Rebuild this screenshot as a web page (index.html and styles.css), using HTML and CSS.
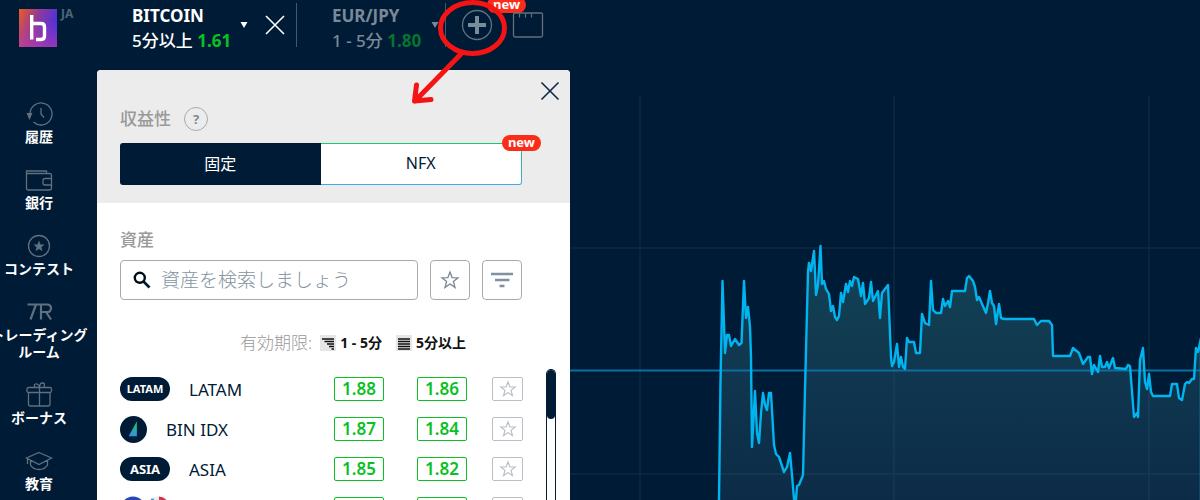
FILE: index.html
```html
<!DOCTYPE html>
<html lang="ja">
<head>
    <meta charset="UTF-8">
    <meta name="viewport" content="width=device-width, initial-scale=1.0">
    <title>BITCOIN</title>
    <link rel="stylesheet" href="styles.css">
</head>
<body>

<header class="topbar">
    <div class="brand">
        <svg class="logo" viewBox="0 0 38 38" aria-hidden="true">
            <defs>
                <linearGradient id="logoFill" x1="0" y1="0" x2="1" y2="0.4">
                    <stop offset="0" stop-color="#ea5c22"/>
                    <stop offset="0.5" stop-color="#8e3a9c"/>
                    <stop offset="1" stop-color="#4a2fe0"/>
                </linearGradient>
                <linearGradient id="logoShade" x1="0" y1="0" x2="0" y2="1">
                    <stop offset="0.3" stop-color="#c93f98" stop-opacity="0"/>
                    <stop offset="1" stop-color="#c93f98" stop-opacity="0.6"/>
                </linearGradient>
            </defs>
            <path fill="url(#logoFill)" d="M0 0h38v38H0z"/>
            <path fill="url(#logoShade)" d="M0 0h38v38H0z"/>
            <path fill="none" stroke="#fff" stroke-width="3.4" d="M12.700 6v24.500M12.700 14.500h9.300q3.500 0 3.500 3.500v9q0 3.500-3.500 3.500h-5"/>
        </svg>
        <span class="lang">JA</span>
    </div>

    <div class="asset">
        <div class="asset-text">
            <div class="asset-name">BITCOIN</div>
            <div class="asset-info">5分以上 <b>1.61</b></div>
        </div>
        <svg class="caret" viewBox="0 0 8 6" aria-hidden="true"><path fill="currentColor" d="M0.500 0h7L4 6z"/></svg>
        <button class="icon-btn close-tab" aria-label="閉じる">
            <svg width="20" height="20" viewBox="0 0 20 20"><path fill="none" stroke="#fff" stroke-width="1.600" d="M1 1l18 18M19 1L1 19"/></svg>
        </button>
    </div>

    <div class="asset inactive">
        <div class="asset-text">
            <div class="asset-name">EUR/JPY</div>
            <div class="asset-info">1 - 5分 <b>1.80</b></div>
        </div>
        <svg class="caret" viewBox="0 0 8 6" aria-hidden="true"><path fill="currentColor" d="M0.500 0h7L4 6z"/></svg>
    </div>

    <div class="tools">
        <button class="icon-btn" aria-label="追加">
            <svg width="32" height="32" viewBox="0 0 32 32">
                <circle cx="16" cy="16" r="14.500" fill="none" stroke="#60717f" stroke-width="1.300"/>
                <path stroke="#7a8b99" stroke-width="4" d="M16 7v18M7 16h18"/>
            </svg>
            <span class="badge">new</span>
        </button>
        <button class="icon-btn" aria-label="レイアウト">
            <svg width="32" height="28" viewBox="0 0 32 28">
                <rect x="1.500" y="2" width="29" height="24" rx="1.500" fill="none" stroke="#60717f" stroke-width="1.300"/>
                <path stroke="#60717f" stroke-width="1.200" d="M7.500 2.500v4M13.500 2.500v4M19.500 2.500v4"/>
            </svg>
        </button>
    </div>
</header>

<div class="content">
    <nav class="sidebar">
        <a href="#" class="nav-item">
            <svg viewBox="0 0 28 28">
                <path d="M5 14A11 11 0 1 1 8.500 22M16 8v6l3 3.500"/>
                <path class="solid" d="M1.500 13h6l-3 7z"/>
            </svg>
            <span>履歴</span>
        </a>
        <a href="#" class="nav-item">
            <svg viewBox="0 0 28 28">
                <path d="M1.500 7.500V22q0 2 2 2h21q2 0 2-2V9.500q0-2-2-2h-23V5h20v2.500M26.500 12.500H20q-2 0-2 2V17q0 2 2 2h6.500"/>
            </svg>
            <span>銀行</span>
        </a>
        <a href="#" class="nav-item">
            <svg viewBox="0 0 28 28">
                <circle cx="14" cy="14" r="10.500"/>
                <path class="solid" d="M14 8.500l1.500 3.900 4 .2-3.100 2.600 1.100 4-3.500-2.300-3.500 2.300 1.100-4-3.100-2.600 4-.2z"/>
            </svg>
            <span>コンテスト</span>
        </a>
        <a href="#" class="nav-item">
            <svg viewBox="0 0 28 28">
                <path stroke-width="2.200" d="M2.500 6.500H22q4 0 4 3.800T22 14h-6M11 6.500L5.500 21.500M16 6.500v15M21 14l5 7.500"/>
            </svg>
            <span>トレーディング<br>ルーム</span>
        </a>
        <a href="#" class="nav-item">
            <svg viewBox="0 0 28 28">
                <rect x="2" y="6.500" width="24.500" height="5" rx="1.500"/>
                <path d="M3.500 11.500V23q0 2 2 2h17.500q2 0 2-2V11.500M14.500 6.500V25M14.500 6.500Q13 2 10.500 3T10.500 6.500M14.500 6.500Q14.500 2 17.500 2T19 6"/>
            </svg>
            <span>ボーナス</span>
        </a>
        <a href="#" class="nav-item">
            <svg viewBox="0 0 28 28">
                <path d="M14 5.500L26.500 11 14 17.500 1.500 11zM5.500 13.500V18q2.500 4.500 8.500 4.500t8.500-4.500v-4.500M2.500 12v5"/>
            </svg>
            <span>教育</span>
        </a>
    </nav>

    <section class="panel">
        <div class="panel-head">
            <button class="icon-btn panel-close" aria-label="閉じる">
                <svg width="20" height="20" viewBox="0 0 20 20"><path fill="none" stroke="#0e2745" stroke-width="1.600" d="M1.500 1.500l17 17M18.500 1.500l-17 17"/></svg>
            </button>
            <div class="label-row">
                <h2>収益性</h2>
                <button class="help" aria-label="ヘルプ">?</button>
            </div>
            <div class="tabs">
                <button class="tab active">固定</button>
                <button class="tab nfx">NFX<span class="badge">new</span></button>
            </div>
        </div>

        <div class="panel-body">
            <label class="search-label" for="search">資産</label>
            <div class="search-row">
                <div class="search-box">
                    <svg width="18" height="18" viewBox="0 0 18 18" aria-hidden="true">
                        <circle cx="6.800" cy="6.800" r="5" fill="none" stroke="#000b18" stroke-width="2.400"/>
                        <path stroke="#001b35" stroke-width="2.600" d="M10.500 10.500l6 6"/>
                    </svg>
                    <input type="text" id="search" placeholder="資産を検索しましょう">
                </div>
                <button class="square-btn" aria-label="お気に入り">
                    <svg width="20" height="20" viewBox="0 0 20 20"><path fill="none" stroke="#7a8795" stroke-width="1.300" d="M10 2l2.100 5.600 5.900.2-4.600 3.700 1.600 5.900-5-3.400-5 3.400 1.600-5.900L2 7.800l5.900-.2z"/></svg>
                </button>
                <button class="square-btn" aria-label="フィルター">
                    <svg width="22" height="20" viewBox="0 0 22 20"><path stroke="#8191a1" stroke-width="2.400" d="M0 4h22M4 10h14.500M8.500 16h5"/></svg>
                </button>
            </div>

            <div class="legend">
                <span class="legend-title">有効期限:</span>
                <span class="legend-item">
                    <svg width="16" height="16" viewBox="0 0 16 16"><path fill="#e6e6e6" d="M0 0h16v16H0z"/><path stroke="#111" stroke-width="1.400" d="M2 4h12M4.500 6.500H14M7 9h7M9 11.500h5M11.500 14H14"/></svg>
                    1 - 5分
                </span>
                <span class="legend-item">
                    <svg width="16" height="16" viewBox="0 0 16 16"><path fill="#e6e6e6" d="M0 0h16v16H0z"/><path stroke="#111" stroke-width="1.400" d="M2 4h12M2 6.500h12M2 9h12M2 11.500h12M2 14h12"/></svg>
                    5分以上
                </span>
            </div>

            <div class="list">
                <table>
                    <tbody>
                        <tr>
                            <td class="name"><div><span class="tag">LATAM</span>LATAM</div></td>
                            <td class="short"><span class="payout">1.88</span></td>
                            <td class="long"><span class="payout">1.86</span></td>
                            <td><button class="fav" aria-label="お気に入り"><svg width="18" height="18" viewBox="0 0 20 20"><use href="#star"/></svg></button></td>
                        </tr>
                        <tr>
                            <td class="name"><div>
                                <svg class="coin" viewBox="0 0 28 28">
                                    <defs>
                                        <linearGradient id="sail" x1="0" y1="0" x2="0" y2="1">
                                            <stop offset="0" stop-color="#10d060"/>
                                            <stop offset="1" stop-color="#3a8fe0"/>
                                        </linearGradient>
                                        <path id="star" fill="none" stroke="#b9bfc6" stroke-width="1.300" d="M10 2l2.100 5.600 5.900.2-4.600 3.700 1.600 5.900-5-3.400-5 3.400 1.600-5.900L2 7.800l5.900-.2z"/>
                                    </defs>
                                    <circle cx="14" cy="14" r="14" fill="#001b35"/>
                                    <path fill="url(#sail)" d="M17.500 5.500V21H9z"/>
                                </svg>BIN IDX</div></td>
                            <td class="short"><span class="payout">1.87</span></td>
                            <td class="long"><span class="payout">1.84</span></td>
                            <td><button class="fav" aria-label="お気に入り"><svg width="18" height="18" viewBox="0 0 20 20"><use href="#star"/></svg></button></td>
                        </tr>
                        <tr>
                            <td class="name"><div><span class="tag wide">ASIA</span>ASIA</div></td>
                            <td class="short"><span class="payout">1.85</span></td>
                            <td class="long"><span class="payout">1.82</span></td>
                            <td><button class="fav" aria-label="お気に入り"><svg width="18" height="18" viewBox="0 0 20 20"><use href="#star"/></svg></button></td>
                        </tr>
                        <tr>
                            <td class="name"><div>
                                <svg width="50" height="26" viewBox="0 0 50 26">
                                    <circle cx="13" cy="13" r="12.500" fill="#2c46b8"/>
                                    <circle cx="38" cy="13" r="12.500" fill="#e8eef4"/>
                                    <path fill="#3a9bd0" d="M31 2.700h3v6h-3z"/>
                                    <path fill="#d8304a" d="M39 .6q6 .4 9 5.400h-9z"/>
                                </svg></div></td>
                            <td class="short"><span class="payout"></span></td>
                            <td class="long"><span class="payout"></span></td>
                            <td><button class="fav" aria-label="お気に入り"></button></td>
                        </tr>
                    </tbody>
                </table>
                <div class="scrollbar"><div class="thumb"></div></div>
            </div>
        </div>
    </section>

    <main class="chart">
        <svg viewBox="570 70 630 430" preserveAspectRatio="xMinYMin slice" aria-hidden="true">
            <defs>
                <linearGradient id="area" gradientUnits="userSpaceOnUse" x1="0" y1="245" x2="0" y2="500">
                    <stop offset="0" stop-color="#134456"/>
                    <stop offset="0.5" stop-color="#10374f"/>
                    <stop offset="1" stop-color="#0c2b47"/>
                </linearGradient>
                <path id="price" d="M719 500L720.500 382 722.500 281 725 353 727 335 729 335 731 346 735 339 739 345 741.500 343 744 281 746 318 748 307 750 327 751 357 752 447 755 391 757 433 759 443 761 413 763 393 765 405 767 410 769 393 771 393 774 445 776 454 779 457 784 472 787 467 790 453 792 475 794 499 796 499 797 486 799 485 803 475 805 390 808 272 809 263 811 271 814 251 816 295 818 285 820.500 246 822 284 824 281 826 289 829 294 831 311 833 306 835 317 837 320 839 316 841 293 843 302 846 284 848 292 850 281 852 286 854 277 858 279 861 296 863 283 865 304 869 298 871 282 873 301 878 291 880 318 882 293 888 285 891 357 892 366 894 362 897 344 899 367 901 357 903 367 905 369 907 338 909 342 914 342 916 353 920 353 922 314 925 323 929 325 931 281 933 310 936 313 941 313 943 299 945 306 948 301 950 307 952 291 965 291 967 278 969 276 973 281 975 287 977 300 979 297 986 313 988 303 990 291 992 303 994 306 996 324 999 304 1001 318 1004 319 1034 319 1037 325 1041 321 1049 321 1052 325 1053 356 1070 356 1073 348 1079 353 1083 364 1088 357 1090 357 1092 374 1094 365 1098 372 1100 356 1102 367 1105 367 1107 362 1109 368 1113 358 1115 368 1126 369 1128 365 1130 366 1134 417 1137 413 1138 417 1140 360 1143 348 1145 382 1147 389 1149 374 1151 392 1153 396 1170 396 1172 384 1177 384 1179 398 1182 400 1185 384 1187 382 1189 383 1192 379 1194 379 1196 348 1198 352 1201 338V510H719z"/>
            </defs>
            <use href="#price" fill="url(#area)"/>
            <path stroke="#3b6f8c" stroke-opacity="0.180" stroke-width="1.500" d="M640 96v404M894 96v404M1149 96v404M570 248h630M570 474h630"/>
            <path stroke="#0b6fa3" stroke-width="2" d="M570 370.500h630"/>
            <use href="#price" class="line"/>
        </svg>
    </main>
</div>

<svg class="marker" width="140" height="110" viewBox="400 0 140 110" aria-hidden="true">
    <g fill="none" stroke="#f51414" stroke-width="5" stroke-linecap="round" stroke-linejoin="round">
        <ellipse cx="472.500" cy="28" rx="32" ry="25.500"/>
        <path d="M461 54L415 101M416.500 85l-2 16 16.500-1.500"/>
    </g>
</svg>

</body>
</html>
```

FILE: styles.css
```css
* {
    box-sizing: border-box;
}

body {
    display: flex;
    flex-direction: column;
    height: 100vh;
    margin: 0;
    overflow: hidden;
    background-color: #001b35;
    color: #001b35;
    font-family: "Noto Sans", "Noto Sans CJK JP", sans-serif;
    font-size: 17px;
}

button,
input {
    font-family: inherit;
    font-size: 16px;
    color: inherit;
}

.icon-btn {
    position: relative;
    padding: 0;
    border: none;
    background: none;
    cursor: pointer;
}

.icon-btn svg {
    display: block;
}

.badge {
    position: absolute;
    height: 16px;
    padding: 0 6px;
    border-radius: 8px;
    background-color: #fb2c1a;
    color: #fff;
    font-size: 13px;
    font-weight: bold;
    line-height: 15px;
}

/* Top bar */
.topbar {
    display: flex;
    flex: 0 0 70px;
    align-items: flex-start;
    color: #fff;
}

.brand {
    display: flex;
    width: 132px;
    padding: 9px 0 0 19px;
    gap: 4px;
}

.logo {
    width: 38px;
    height: 38px;
}

.lang {
    color: #50647a;
    font-size: 12px;
    font-weight: bold;
    line-height: 10px;
}

.asset {
    display: flex;
    align-items: center;
    height: 44px;
    margin-top: 3px;
    padding-right: 11px;
    border-right: 1px solid #44586e;
    white-space: nowrap;
}

.asset-text {
    min-width: 100px;
    margin-top: 5px;
}

.asset-name {
    font-weight: bold;
    line-height: 25px;
}

.asset-info {
    font-weight: 500;
    line-height: 25px;
}

.asset b {
    color: #0ac125;
}

.caret {
    width: 8px;
    height: 6px;
    margin-left: 8px;
}

.close-tab {
    margin-left: 17px;
}

.asset.inactive {
    margin-left: 35px;
    padding-right: 6px;
    color: #7a8997;
}

.inactive .asset-text {
    min-width: 91px;
}

.inactive b {
    color: #067333;
}

.tools {
    display: flex;
    align-items: center;
    gap: 19px;
    margin: 9px 0 0 15px;
}

.tools .badge {
    top: -12px;
    left: 26px;
}

/* Left menu */
.content {
    display: flex;
    flex: 1;
    min-height: 0;
}

.sidebar {
    display: flex;
    flex: 0 0 97px;
    flex-direction: column;
    align-items: center;
    gap: 21px;
    padding: 30px 19px 0 0;
    overflow: hidden;
}

.nav-item {
    display: flex;
    flex-direction: column;
    align-items: center;
    flex-shrink: 0;
    color: #fff;
    font-size: 14px;
    font-weight: bold;
    line-height: 17px;
    text-align: center;
    text-decoration: none;
    white-space: nowrap;
}

.nav-item svg {
    width: 28px;
    height: 28px;
    fill: none;
    stroke: #5f7081;
    stroke-width: 1.3;
}

.nav-item .solid {
    fill: #5f7081;
    stroke: none;
}

/* Asset panel */
.panel {
    display: flex;
    flex: 0 0 473px;
    flex-direction: column;
    border-radius: 4px 4px 0 0;
    background-color: #fff;
    overflow: hidden;
}

.panel-head {
    position: relative;
    padding: 37px 48px 18px 23px;
    background-color: #ececec;
}

.panel-close {
    position: absolute;
    top: 11px;
    right: 10px;
}

.label-row {
    display: flex;
    align-items: center;
    gap: 13px;
    margin-bottom: 12px;
}

.label-row h2 {
    margin: 0;
    color: #999;
    font-size: 17px;
    font-weight: 500;
    line-height: 24px;
}

.help {
    width: 24px;
    height: 24px;
    padding: 0;
    border: 1px solid #aaa;
    border-radius: 50%;
    background: none;
    color: #7d8a96;
    font-size: 13px;
    font-weight: bold;
    line-height: 20px;
}

.tabs {
    display: flex;
}

.tab {
    position: relative;
    flex: 1;
    height: 42px;
    padding: 0 0 2px;
    border: none;
    cursor: pointer;
}

.tab.active {
    border-radius: 3px 0 0 3px;
    background-color: #001b35;
    color: #fff;
}

.tab.nfx {
    border: 1px solid transparent;
    border-left: none;
    border-radius: 0 3px 3px 0;
    background: linear-gradient(#fff, #fff) padding-box, linear-gradient(#1fc76a, #4aa5e8) border-box;
}

.tab .badge {
    top: -9px;
    right: -20px;
}

.panel-body {
    display: flex;
    flex: 1;
    flex-direction: column;
    min-height: 0;
    padding: 25px 14px 0 23px;
}

.search-label {
    color: #999;
    font-weight: 500;
    line-height: 24px;
}

.search-row {
    display: flex;
    gap: 12px;
    margin: 8px 34px 0 0;
}

.search-box {
    display: flex;
    flex: 1;
    align-items: center;
    gap: 10px;
    min-width: 0;
    height: 40px;
    padding: 0 12px;
    border: 1px solid #aaa;
    border-radius: 4px;
}

.search-box svg {
    flex-shrink: 0;
}

.search-box input {
    flex: 1;
    min-width: 0;
    padding: 0;
    border: none;
    outline: none;
    background: none;
    font-size: 19px;
    font-weight: 300;
}

.search-box input::placeholder {
    color: #8593a2;
}

.square-btn {
    display: flex;
    flex: 0 0 40px;
    align-items: center;
    justify-content: center;
    height: 40px;
    padding: 0;
    border: 1px solid #aaa;
    border-radius: 4px;
    background-color: #fff;
}

.legend {
    display: flex;
    align-items: center;
    justify-content: flex-end;
    gap: 14px;
    margin: 31px 90px 0 0;
    line-height: 24px;
}

.legend-title {
    margin-right: -6px;
    color: #999;
    font-size: 17px;
    font-weight: 300;
}

.legend-item {
    display: flex;
    align-items: center;
    gap: 4px;
    color: #111;
    font-size: 14px;
    font-weight: bold;
}

.list {
    display: flex;
    flex: 1;
    justify-content: space-between;
    margin-top: 14px;
    min-height: 0;
    overflow: hidden;
}

table {
    width: 403px;
    height: 160px;
    table-layout: fixed;
    border-collapse: collapse;
}

td {
    height: 40px;
    padding: 0;
}

.name {
    width: 214px;
}

.short {
    width: 83px;
}

.long {
    width: 75px;
}

.name div {
    display: flex;
    align-items: center;
    gap: 19px;
}

.tag {
    width: 50px;
    height: 24px;
    border-radius: 12px;
    background-color: #001b35;
    color: #fff;
    font-size: 11px;
    font-weight: bold;
    line-height: 24px;
    text-align: center;
}

.tag.wide {
    font-size: 13px;
}

.coin {
    width: 27px;
    height: 27px;
}

.payout {
    display: block;
    width: 50px;
    height: 24px;
    border: 1px solid #0ac125;
    border-radius: 2px;
    color: #0ac125;
    font-weight: 600;
    line-height: 22px;
    text-align: center;
}

.fav {
    display: flex;
    align-items: center;
    justify-content: center;
    width: 31px;
    height: 24px;
    padding: 0;
    border: 1px solid #b9bfc6;
    border-radius: 2px;
    background-color: #fff;
}

.scrollbar {
    width: 10px;
    border: 1px solid #001b35;
    border-bottom: none;
    border-radius: 5px 5px 0 0;
}

.thumb {
    height: 49px;
    border-radius: 4px;
    background-color: #001b35;
}

/* Chart */
.chart {
    flex: 1;
    min-width: 0;
}

.chart svg {
    display: block;
    width: 100%;
    height: 100%;
}

.chart .line {
    fill: none;
    stroke: #00b4f0;
    stroke-width: 2.4;
    stroke-linejoin: round;
}

.marker {
    position: absolute;
    top: 0;
    left: 400px;
    pointer-events: none;
}
```
